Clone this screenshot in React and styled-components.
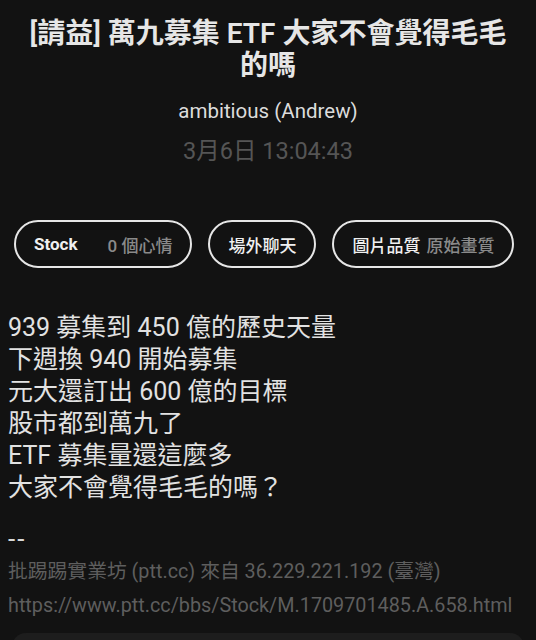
import React from "react";
import styled, { createGlobalStyle } from "styled-components";

const GlobalStyle = createGlobalStyle`
  html, body {
    margin: 0;
    padding: 0;
    background: #121212;
  }
  body {
    font-family: Roboto, "Noto Sans CJK TC", sans-serif;
    color: #e4e4e4;
    overflow: hidden;
  }
`;

const Page = styled.div`
  width: 536px;
  height: 640px;
  overflow: hidden;
  background: #121212;
`;

const Header = styled.header`
  display: flex;
  flex-direction: column;
  align-items: center;
  padding: 18px 16px 0;
`;

const Title = styled.h1`
  margin: 0;
  font-size: 28px;
  font-weight: 600;
  line-height: 32px;
  text-align: center;
  color: #e6e6e6;
`;

const Author = styled.div`
  margin-top: 16px;
  font-size: 20.5px;
  line-height: 26px;
  color: #dcdcdc;
`;

const Stamp = styled.div`
  margin-top: 14px;
  font-size: 23.5px;
  line-height: 26px;
  color: #555;
`;

const Chips = styled.div`
  display: flex;
  gap: 16px;
  padding: 0 14px;
  margin-top: 56px;
`;

const Chip = styled.div`
  display: flex;
  align-items: center;
  gap: ${(p) => p.$gap || 6}px;
  height: 48px;
  box-sizing: border-box;
  padding: 0 18px;
  border: 2px solid #e6e6e6;
  border-radius: 24px;
  font-size: 17px;
  white-space: nowrap;
`;

const ChipLabel = styled.span`
  color: #f0f0f0;
  font-weight: ${(p) => (p.$bold ? 700 : 500)};
`;

const ChipValue = styled.span`
  color: #8a8a8a;
  font-weight: 500;
`;

const Body = styled.div`
  margin-top: 44px;
  padding: 0 8px;
  font-size: 25px;
  line-height: 32px;
  color: #e2e2e2;
`;

const Line = styled.div``;

const Sig = styled.div`
  margin-top: 19px;
  padding: 0 8px;
  font-size: 19.8px;
  line-height: 34px;
`;

const Dash = styled.div`
  color: #d8d8d8;
  font-size: 26px;
  line-height: 32px;
  letter-spacing: 2px;
`;

const Meta = styled.div`
  color: #5e5e5e;
  white-space: nowrap;
`;

const Dock = styled.div`
  margin: 10px 12px 0;
  height: 40px;
  border-radius: 14px;
  background: #1d1d1d;
`;

const bodyLines = [
  "939 募集到 450 億的歷史天量",
  "下週換 940 開始募集",
  "元大還訂出 600 億的目標",
  "股市都到萬九了",
  "ETF 募集量還這麼多",
  "大家不會覺得毛毛的嗎？",
];

export default function App() {
  return (
    <Page>
      <GlobalStyle />
      <Header>
        <Title>[請益] 萬九募集 ETF 大家不會覺得毛毛的嗎</Title>
        <Author>ambitious (Andrew)</Author>
        <Stamp>3月6日 13:04:43</Stamp>
      </Header>
      <Chips>
        <Chip $gap={30}>
          <ChipLabel $bold>Stock</ChipLabel>
          <ChipValue>0 個心情</ChipValue>
        </Chip>
        <Chip>
          <ChipLabel>場外聊天</ChipLabel>
        </Chip>
        <Chip>
          <ChipLabel>圖片品質</ChipLabel>
          <ChipValue>原始畫質</ChipValue>
        </Chip>
      </Chips>
      <Body>
        {bodyLines.map((l) => (
          <Line key={l}>{l}</Line>
        ))}
      </Body>
      <Sig>
        <Dash>--</Dash>
        <Meta>批踢踢實業坊 (ptt.cc) 來自 36.229.221.192 (臺灣)</Meta>
        <Meta>https://www.ptt.cc/bbs/Stock/M.1709701485.A.658.html</Meta>
      </Sig>
      <Dock />
    </Page>
  );
}
